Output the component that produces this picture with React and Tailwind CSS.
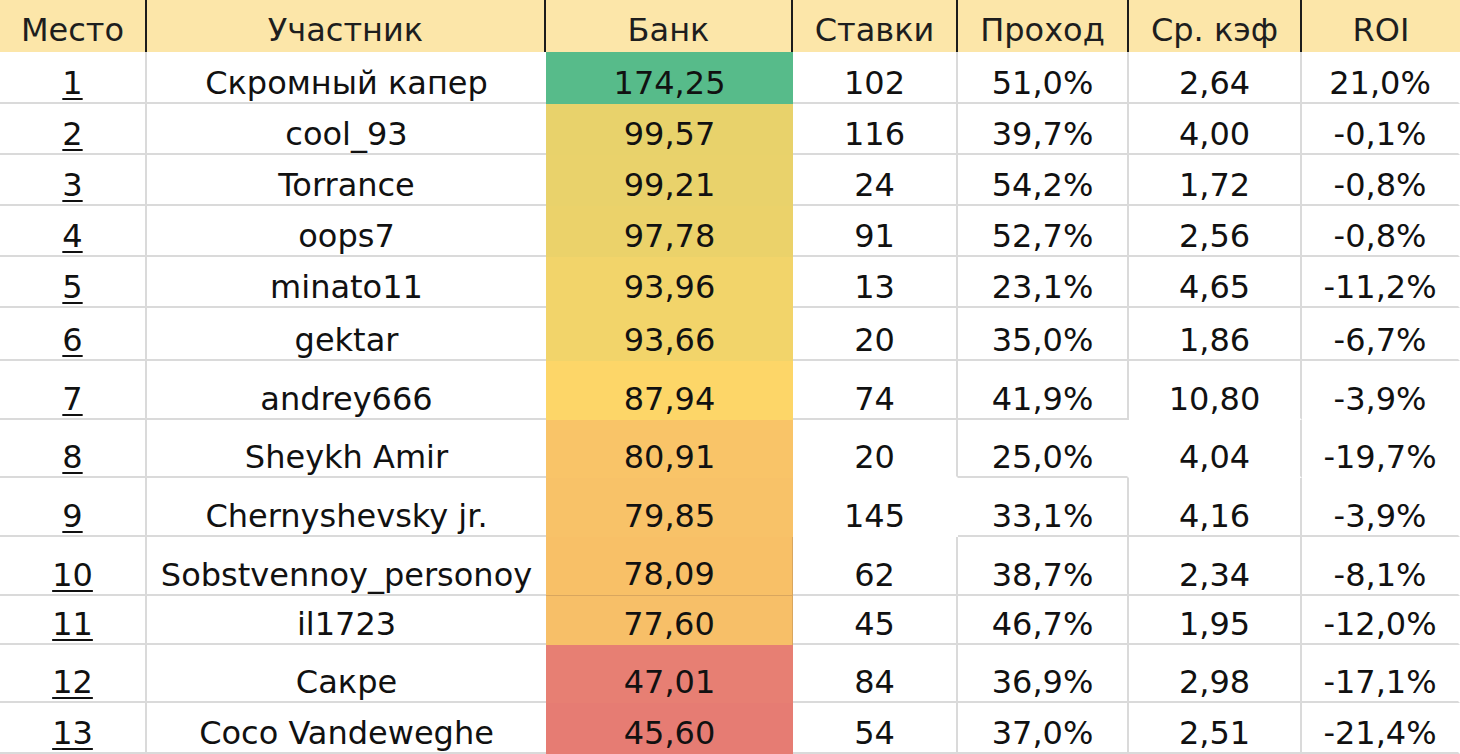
const headers = ['Место', 'Участник', 'Банк', 'Ставки', 'Проход', 'Ср. кэф', 'ROI'];

// place, name, bank, bets, pass, avg odds, roi, bank colour, row height
const rows = [
  [1, 'Скромный капер', '174,25', '102', '51,0%', '2,64', '21,0%', 'bg-[#57bb8a]', 'h-[52px]'],
  [2, 'cool_93', '99,57', '116', '39,7%', '4,00', '-0,1%', 'bg-[#e8d26b]', 'h-[51px]'],
  [3, 'Torrance', '99,21', '24', '54,2%', '1,72', '-0,8%', 'bg-[#e9d26b]', 'h-[51px]'],
  [4, 'oops7', '97,78', '91', '52,7%', '2,56', '-0,8%', 'bg-[#ebd26a]', 'h-[51px]'],
  [5, 'minato11', '93,96', '13', '23,1%', '4,65', '-11,2%', 'bg-[#f2d46a]', 'h-[51px]'],
  [6, 'gektar', '93,66', '20', '35,0%', '1,86', '-6,7%', 'bg-[#f2d46a]', 'h-[53px]'],
  [7, 'andrey666', '87,94', '74', '41,9%', '10,80', '-3,9%', 'bg-[#fdd668]', 'h-[59px]'],
  [8, 'Sheykh Amir', '80,91', '20', '25,0%', '4,04', '-19,7%', 'bg-[#f9c468]', 'h-[58px]'],
  [9, 'Chernyshevsky jr.', '79,85', '145', '33,1%', '4,16', '-3,9%', 'bg-[#f8c268]', 'h-[59px]'],
  [10, 'Sobstvennoy_personoy', '78,09', '62', '38,7%', '2,34', '-8,1%', 'bg-[#f8c067]', 'h-[59px]'],
  [11, 'il1723', '77,60', '45', '46,7%', '1,95', '-12,0%', 'bg-[#f7bf68]', 'h-[49px]'],
  [12, 'Сакре', '47,01', '84', '36,9%', '2,98', '-17,1%', 'bg-[#e77f73]', 'h-[58px]'],
  [13, 'Coco Vandeweghe', '45,60', '54', '37,0%', '2,51', '-21,4%', 'bg-[#e67c73]', 'h-[51px]'],
];

// gridlines that the sheet doesn't draw (white cells over them)
const missing = {
  '6-5': { b: true },
  '6-6': { b: true },
  '7-3': { b: true },
  '7-4': { r: true },
  '7-5': { b: true },
  '7-6': { b: true },
  '8-3': { r: true, b: true },
};

const cols = 'grid grid-cols-[147px_399px_247px_165px_171px_173px_158px]';

function Cell({ children, noR, noB }) {
  const r = noR ? 'border-r-2 border-r-transparent' : 'border-r-2 border-r-[#dadada]';
  const b = noB ? 'border-b-2 border-b-transparent' : 'border-b-2 border-b-[#dadada]';
  return (
    <div className={`flex items-end justify-center pb-[3px] bg-white ${r} ${b}`}>
      {children}
    </div>
  );
}

export default function App() {
  return (
    <div className="w-[1460px] h-[754px] overflow-hidden bg-white font-['DejaVu_Sans',Verdana,sans-serif] text-[32px] leading-[32px] text-[#111]">
      <div className={`${cols} h-[52px] bg-[#fce6a9] text-[#1e1e1e]`}>
        {headers.map((h, i) => (
          <div
            key={h}
            className={`flex items-end justify-center pb-[6px] ${i < 6 ? 'border-r-2 border-r-[#1c1c1c]' : ''}`}
          >
            {h}
          </div>
        ))}
      </div>

      {rows.map((row, i) => {
        const [place, name, bank, bets, pass, odds, roi, bankBg, h] = row;
        const m = (c) => missing[`${i}-${c}`] || {};
        let bankBorder = '';
        if (place === 10) bankBorder = 'border-r border-b border-[#d9a65e]';
        if (place === 11) bankBorder = 'border-r border-[#d9a65e]';
        return (
          <div key={place} className={`${cols} ${h}`}>
            <Cell>
              <span className="underline decoration-2 underline-offset-[4px]">{place}</span>
            </Cell>
            <div className="flex items-end justify-center pb-[3px] border-b-2 border-b-[#dadada] whitespace-nowrap">
              {name}
            </div>
            <div className={`flex items-end justify-center pb-[5px] ${bankBg} ${bankBorder}`}>{bank}</div>
            <Cell noR={m(3).r} noB={m(3).b}>{bets}</Cell>
            <Cell noR={m(4).r} noB={m(4).b}>{pass}</Cell>
            <Cell noR={m(5).r} noB={m(5).b}>{odds}</Cell>
            <Cell noR noB={m(6).b}>{roi}</Cell>
          </div>
        );
      })}
    </div>
  );
}
